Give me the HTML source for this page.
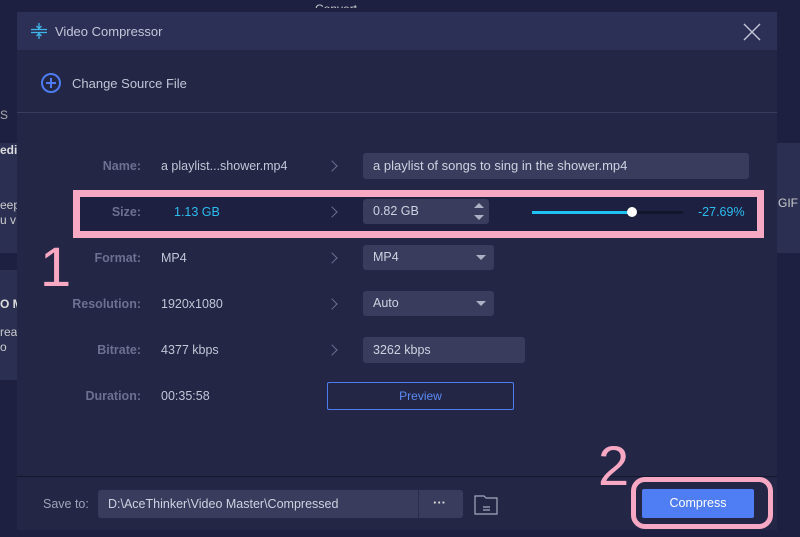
<!DOCTYPE html>
<html><head><style>
body{margin:0;width:800px;height:537px;background:#1d2040;position:relative;overflow:hidden;font-family:"Liberation Sans",sans-serif;font-size:12px;color:#c9ccdc}
.a{position:absolute;white-space:nowrap}
.lbl{position:absolute;width:124px;left:17px;text-align:right;color:#6c7191;font-weight:bold;font-size:12.5px}
.val{position:absolute;left:161px;color:#c3c6d6;font-size:12.5px}
.chev{position:absolute;left:328px;width:7px;height:7px;border-top:1px solid #6c7191;border-right:1px solid #6c7191;transform:rotate(45deg)}
.box{position:absolute;background:#393c5c;border-radius:3px;color:#cfd2e0;padding-left:10px;box-sizing:border-box;white-space:nowrap;font-size:12.5px}
.tri{position:absolute;right:8px;top:10px;border-left:5px solid transparent;border-right:5px solid transparent;border-top:5px solid #aeb1c4}
</style></head><body>
<div class="a" style="left:0;top:143px;width:17px;height:110px;background:#2b2f52"></div>
<div class="a" style="left:0;top:270px;width:17px;height:110px;background:#2b2f52"></div>
<div class="a" style="left:0;top:108px;color:#aaa;font-size:12px">S</div>
<div class="a" style="left:0;top:143px;color:#ddd;font-weight:bold">edi</div>
<div class="a" style="left:0;top:198px;color:#ccc;line-height:15px">eep<br>u v</div>
<div class="a" style="left:0;top:297px;color:#ddd;font-weight:bold">O M</div>
<div class="a" style="left:0;top:325px;color:#ccc;line-height:15px">reat<br>o</div>
<div class="a" style="left:777px;top:143px;width:23px;height:110px;background:#2b2f52"></div>
<div class="a" style="left:778px;top:196px;color:#ccc">GIF w</div>
<div class="a" style="left:315px;top:2px;color:#ccc;font-size:12px;height:6px;overflow:hidden">Convert</div>
<div class="a" style="left:17px;top:12px;width:760px;height:518px;background:#232645"></div>
<div class="a" style="left:17px;top:12px;width:760px;height:38px;background:#2c3056"></div>
<svg class="a" style="left:30px;top:22px" width="18" height="18" viewBox="0 0 18 18" stroke="#3fb6ea" fill="none" stroke-width="1.3"><path d="M1 7.5h16M1 10.5h16M9 1v5M6.5 4L9 6.5 11.5 4M9 17v-5M6.5 14L9 11.5 11.5 14"/></svg>
<div class="a" style="left:55px;top:24px;font-size:13px;color:#c4c7d8">Video Compressor</div>
<svg class="a" style="left:743px;top:23px" width="18" height="18" stroke="#c4c7d8" stroke-width="1.4"><path d="M1 1L17 17M17 1L1 17"/></svg>
<svg class="a" style="left:40px;top:72px" width="22" height="22" fill="none" stroke="#4d7cf0" stroke-width="2"><circle cx="11" cy="11" r="9"/><path d="M11 6v10M6 11h10"/></svg>
<div class="a" style="left:72px;top:76px;font-size:13px;color:#c1c4d5">Change Source File</div>
<div class="a" style="left:17px;top:112px;width:760px;height:1px;background:#3a3d5e"></div>

<div class="lbl" style="top:159px">Name:</div><div class="val" style="top:159px">a playlist...shower.mp4</div><div class="chev" style="top:162px"></div>
<div class="box" style="left:363px;top:153px;width:386px;height:26px;line-height:26px;font-size:13px">a playlist of songs to sing in the shower.mp4</div>

<div class="a" style="left:73px;top:190px;width:691px;height:48px;border:7px solid #f7a9c4;box-sizing:border-box;background:#1d2040"></div>
<div class="lbl" style="top:205px">Size:</div><div class="val" style="left:174px;top:205px;color:#2dbdf0">1.13 GB</div><div class="chev" style="top:208px"></div>
<div class="box" style="left:363px;top:199px;width:126px;height:25px;line-height:25px">0.82 GB</div>
<div class="a" style="left:474px;top:203px;border-left:5px solid transparent;border-right:5px solid transparent;border-bottom:5px solid #aeb1c4"></div>
<div class="a" style="left:474px;top:215px;border-left:5px solid transparent;border-right:5px solid transparent;border-top:5px solid #aeb1c4"></div>
<div class="a" style="left:532px;top:211px;width:151px;height:3px;background:#14162e"></div>
<div class="a" style="left:532px;top:211px;width:100px;height:3px;background:#1ec3f2"></div>
<div class="a" style="left:627px;top:207px;width:10px;height:10px;border-radius:50%;background:#fff"></div>
<div class="a" style="left:698px;top:205px;color:#2dbdf0;font-size:12.5px">-27.69%</div>

<div class="a" style="left:40px;top:237px;color:#f7a9c4;font-size:56px;line-height:60px">1</div>
<div class="lbl" style="top:251px">Format:</div><div class="val" style="top:251px">MP4</div><div class="chev" style="top:254px"></div>
<div class="box" style="left:363px;top:245px;width:131px;height:25px;line-height:25px">MP4<div class="tri"></div></div>
<div class="lbl" style="top:297px">Resolution:</div><div class="val" style="top:297px">1920x1080</div><div class="chev" style="top:300px"></div>
<div class="box" style="left:363px;top:291px;width:131px;height:25px;line-height:25px">Auto<div class="tri"></div></div>
<div class="lbl" style="top:343px">Bitrate:</div><div class="val" style="top:343px">4377 kbps</div><div class="chev" style="top:346px"></div>
<div class="box" style="left:363px;top:337px;width:162px;height:26px;line-height:26px">3262 kbps</div>
<div class="lbl" style="top:389px">Duration:</div><div class="val" style="top:389px">00:35:58</div>
<div class="a" style="left:327px;top:382px;width:187px;height:28px;border:1px solid #4d7cf0;box-sizing:border-box;border-radius:2px;text-align:center;line-height:26px;color:#5b8bf5">Preview</div>

<div class="a" style="left:17px;top:476px;width:760px;height:1px;background:#14162e"></div>
<div class="a" style="left:43px;top:497px;color:#a0a3b8;font-size:12.5px">Save to:</div>
<div class="box" style="left:98px;top:490px;width:365px;height:28px;line-height:28px">D:\AceThinker\Video Master\Compressed</div>
<div class="a" style="left:418px;top:490px;width:1px;height:28px;background:#2a2d4c"></div>
<div class="a" style="left:433px;top:495px;color:#ddd;font-weight:bold;font-size:13px">···</div>
<svg class="a" style="left:474px;top:493px" width="24" height="22" fill="none" stroke="#a6a9be" stroke-width="1.2"><path d="M1 3h9l2 2h11v16H1z"/><path d="M9 14h7M9 17h7"/></svg>
<div class="a" style="left:598px;top:436px;color:#f7a9c4;font-size:56px;line-height:60px">2</div>
<div class="a" style="left:631px;top:477px;width:142px;height:52px;border:5px solid #f7a9c4;border-radius:14px;box-sizing:border-box"></div>
<div class="a" style="left:642px;top:489px;width:112px;height:29px;background:#4f7df4;border-radius:2px;color:#fff;text-align:center;line-height:29px;font-size:12.5px">Compress</div>
</body></html>
